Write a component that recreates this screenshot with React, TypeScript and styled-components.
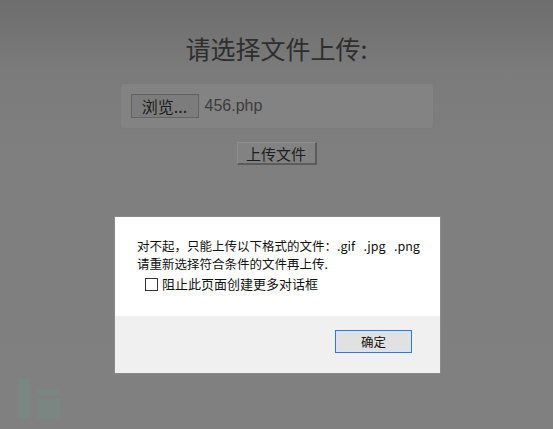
import { createGlobalStyle, styled } from "styled-components";

const GlobalStyle = createGlobalStyle`
  html, body {
    margin: 0;
    padding: 0;
  }
  body {
    font-family: "Noto Sans CJK SC", "Liberation Sans", sans-serif;
  }
`;

const App = () => {
  return (
    <SPage>
      <GlobalStyle />
      <STitle>请选择文件上传:</STitle>
      <SFileBox>
        <SBrowseButton>浏览...</SBrowseButton>
        <SFileName>456.php</SFileName>
      </SFileBox>
      <SUploadButton>上传文件</SUploadButton>

      <SDialog>
        <SDialogBody>
          <SMessageLine>{"对不起，只能上传以下格式的文件：.gif   .jpg   .png"}</SMessageLine>
          <SMessageLine>请重新选择符合条件的文件再上传.</SMessageLine>
          <SCheckRow>
            <SCheckBox />
            <span>阻止此页面创建更多对话框</span>
          </SCheckRow>
        </SDialogBody>
        <SDialogFooter>
          <SOkButton>确定</SOkButton>
        </SDialogFooter>
      </SDialog>

      <SWatermark width="50" height="44" viewBox="0 0 50 44">
        <rect x="2" y="2" width="12" height="40" fill="#6f9484" />
        <rect x="21" y="12" width="23" height="6" fill="#6f9484" />
        <rect x="21" y="22" width="23" height="20" fill="#6f9484" />
      </SWatermark>
    </SPage>
  );
};

const SPage = styled.div`
  position: relative;
  display: flex;
  flex-direction: column;
  align-items: center;
  width: 553px;
  height: 429px;
  overflow: hidden;
  background: linear-gradient(#6d6d6d 0px, #7b7b7b 70px, #7f7f7f 160px, #808080);
`;

const STitle = styled.h1`
  margin: 32px 0 0;
  font-size: 25px;
  line-height: 32px;
  font-weight: 400;
  color: #2e2e2e;
  font-family: "Noto Sans CJK SC", "Liberation Sans", sans-serif;
`;

const SFileBox = styled.div`
  display: flex;
  align-items: center;
  gap: 6px;
  box-sizing: border-box;
  width: 314px;
  height: 46px;
  margin-top: 19px;
  padding: 0 10px;
  background: #838383;
  border: 1px solid #7b7b7b;
  border-radius: 4px;
`;

const SBrowseButton = styled.div`
  box-sizing: border-box;
  width: 68px;
  height: 24px;
  display: flex;
  align-items: center;
  justify-content: center;
  background: #7c7c7c;
  border: 1px solid #626262;
  font-size: 16px;
  color: #1c1c1c;
`;

const SFileName = styled.span`
  font-family: "Liberation Sans", sans-serif;
  font-size: 16px;
  color: #3c3c3c;
`;

const SUploadButton = styled.div`
  box-sizing: border-box;
  width: 80px;
  height: 23px;
  margin-top: 13px;
  display: flex;
  align-items: center;
  justify-content: center;
  background: #828282;
  border-top: 1px solid #8e8e8e;
  border-left: 1px solid #8e8e8e;
  border-right: 2px solid #5c5c5c;
  border-bottom: 2px solid #5c5c5c;
  font-size: 15px;
  color: #1e1e1e;
`;

const SDialog = styled.div`
  position: absolute;
  left: 115px;
  top: 217px;
  width: 325px;
  height: 156px;
  display: flex;
  flex-direction: column;
  background: #ffffff;
  box-shadow: 0 0 0 1px #8a8a8a;
`;

const SDialogBody = styled.div`
  box-sizing: border-box;
  height: 99px;
  padding: 20px 22px 0;
  background: #ffffff;
  font-family: "Noto Sans CJK SC", "Liberation Sans", sans-serif;
  font-size: 12.5px;
  color: #111111;
`;

const SMessageLine = styled.div`
  line-height: 18px;
  white-space: pre;
`;

const SCheckRow = styled.label`
  display: flex;
  align-items: center;
  gap: 4px;
  margin-top: 2px;
  padding-left: 8px;
  font-size: 13px;
  line-height: 18px;
`;

const SCheckBox = styled.span`
  box-sizing: border-box;
  width: 13px;
  height: 13px;
  border: 1px solid #333333;
  background: #ffffff;
`;

const SDialogFooter = styled.div`
  flex: 1;
  display: flex;
  justify-content: flex-end;
  align-items: flex-start;
  padding: 14px 28px 0 0;
  background: #f0f0f0;
`;

const SOkButton = styled.div`
  box-sizing: border-box;
  width: 77px;
  height: 23px;
  display: flex;
  align-items: center;
  justify-content: center;
  background: #e1e1e1;
  border: 1px solid #2f78d6;
  box-shadow: inset 0 0 0 1px #d6e6fa;
  font-size: 12.5px;
  color: #111111;
`;

const SWatermark = styled.svg`
  position: absolute;
  left: 16px;
  bottom: 8px;
  opacity: 0.3;
`;

export default App;
